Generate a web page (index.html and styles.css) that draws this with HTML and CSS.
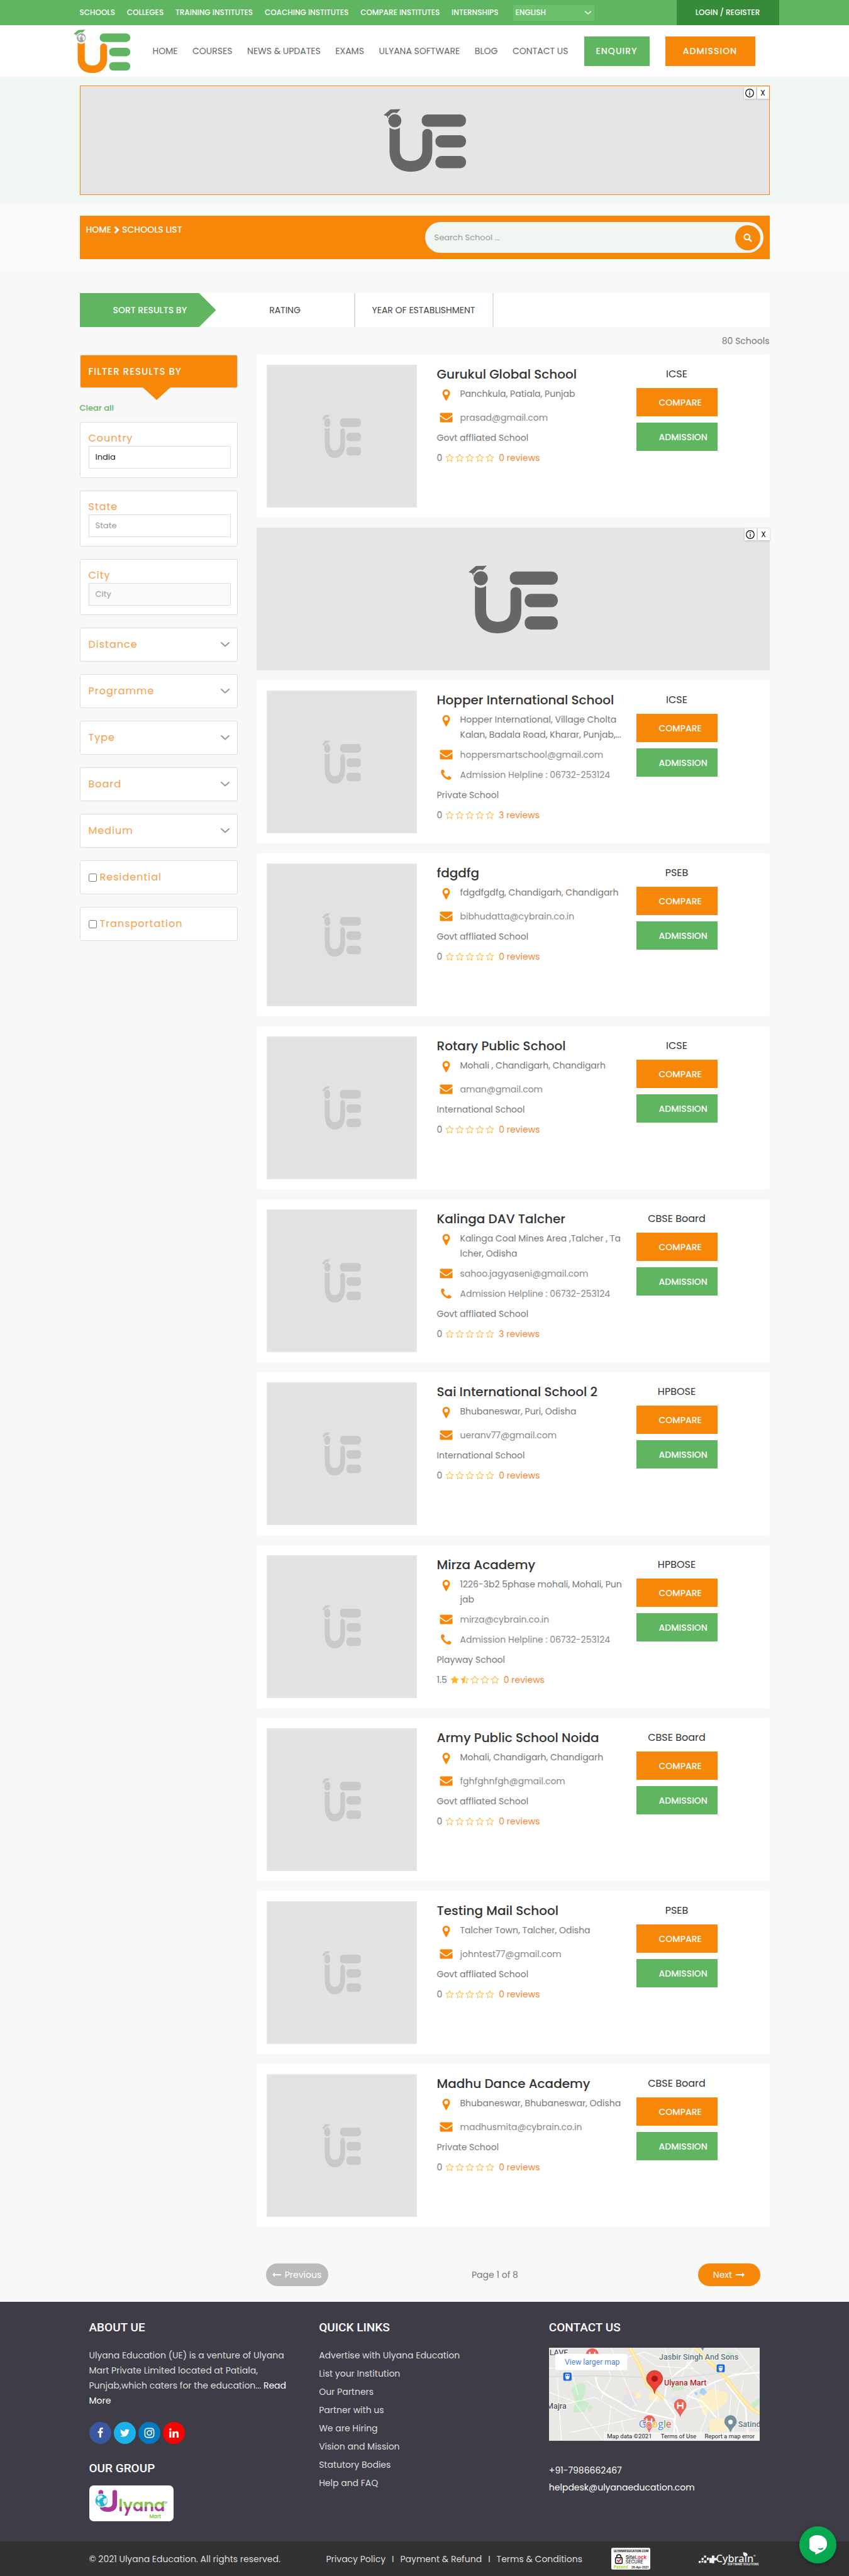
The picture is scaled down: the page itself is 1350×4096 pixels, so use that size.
FILE: index.html
```html
<!DOCTYPE html>
<html lang="en">
<head>
<meta charset="utf-8">
<meta name="viewport" content="width=device-width, initial-scale=1">
<title>Schools List - Ulyana Education</title>
<link rel="stylesheet" href="styles.css">
</head>
<body>
<svg class="sprite" aria-hidden="true">
  <symbol id="ue" viewBox="0 0 132 100" preserveAspectRatio="none">
    <path class="cap" d="M0 10L11 1L27 0.500L21 7Q14 4 9 11L7 12L7.500 16L5 11.500Z"/>
    <circle class="globe" cx="18" cy="19" r="10.500"/>
    <path class="land" d="M10 15l5-4 4 2-2 4-3 2 2 5-3 1zM21 12l5 4 1 5-3 5-3-3 1-3-3-3z"/>
    <path class="u" d="M9.500 30Q18 36 26 30V66C26 77 32 83 43.500 83C55 83 62 77 62 66V40a8 8 0 0 1 16 0V67C78 88 65 100 43.500 100C22 100 9.500 88 9.500 67Z"/>
    <g class="e"><rect x="61" y="9" width="71" height="19.500" rx="9"/><rect x="83" y="42" width="49" height="19.500" rx="9"/><rect x="83" y="75" width="49" height="19.500" rx="9"/></g>
  </symbol>
  <symbol id="pin" viewBox="0 0 12 18"><path fill-rule="evenodd" d="M6 0a6 6 0 0 1 6 6c0 1.500-.5 2.500-1 3.500L7 17.200a1.100 1.100 0 0 1-2 0L1 9.500C.5 8.500 0 7.500 0 6a6 6 0 0 1 6-6zM6 3a3 3 0 1 0 0 6a3 3 0 0 0 0-6z"/></symbol>
  <symbol id="mail" viewBox="0 0 20 16"><path d="M0 3.800V2a1.500 1.500 0 0 1 1.500-1.500h17A1.500 1.500 0 0 1 20 2v1.800l-8 5.700q-2 1.400-4 0zM0 5.800l7.500 5.300q2.500 1.600 5 0L20 5.800V14a1.500 1.500 0 0 1-1.500 1.500h-17A1.500 1.500 0 0 1 0 14z"/></symbol>
  <symbol id="phone" viewBox="190 190 1420 1360"><path d="M1600 1240q0 27-10 70.500t-21 68.500q-21 50-122 106-94 51-186 51-27 0-53-3.500t-57.500-12.500-47-14.500-55.500-20.500-49-18q-98-35-175-83-127-79-264-216t-216-264q-48-77-83-175-3-9-18-49t-20.500-55.500-14.500-47-12.500-57.500-3.500-53q0-92 51-186 56-101 106-122 25-11 68.500-21t70.500-10q14 0 21 3 18 6 53 76 11 19 30 54t35 63.500 31 53.500q3 4 17.500 25t21.500 35.500 7 28.500q0 20-28.500 50t-62 55-62 53-28.500 46q0 9 5 22.500t8.500 20.500 14 24 11.500 19q76 137 174 235t235 174q2 1 19 11.500t24 14 20.500 8.500 22.500 5q18 0 46-28.500t53-62 55-62 50-28.500q14 0 28.500 7t35.500 21.500 25 17.500q25 15 53.500 31t63.500 35 54 30q70 35 76 53 3 7 3 21z"/></symbol>
  <symbol id="star-o" viewBox="0 0 14 14"><path fill="none" stroke="currentColor" d="M7 1.200L8.800 5L13 5.500L9.900 8.400L10.700 12.600L7 10.500L3.300 12.600L4.100 8.400L1 5.500L5.200 5Z"/></symbol>
  <symbol id="star" viewBox="0 0 14 14"><path stroke="currentColor" d="M7 1.200L8.800 5L13 5.500L9.900 8.400L10.700 12.600L7 10.500L3.300 12.600L4.100 8.400L1 5.500L5.200 5Z"/></symbol>
  <symbol id="star-h" viewBox="0 0 14 14"><path fill="none" stroke="currentColor" d="M7 1.200L8.800 5L13 5.500L9.900 8.400L10.700 12.600L7 10.500L3.300 12.600L4.100 8.400L1 5.500L5.200 5Z"/><path d="M7 1.200V10.500L3.300 12.600L4.100 8.400L1 5.500L5.200 5Z"/></symbol>
  <symbol id="stars-0" viewBox="0 0 78 14"><use href="#star-o" width="14" height="14"/><use href="#star-o" x="16" width="14" height="14"/><use href="#star-o" x="32" width="14" height="14"/><use href="#star-o" x="48" width="14" height="14"/><use href="#star-o" x="64" width="14" height="14"/></symbol>
  <symbol id="stars-15" viewBox="0 0 78 14"><use href="#star" width="14" height="14"/><use href="#star-h" x="16" width="14" height="14"/><use href="#star-o" x="32" width="14" height="14"/><use href="#star-o" x="48" width="14" height="14"/><use href="#star-o" x="64" width="14" height="14"/></symbol>
  <symbol id="chev" viewBox="0 0 14 8"><path fill="none" stroke="currentColor" stroke-width="2" stroke-linecap="round" stroke-linejoin="round" d="M1 1L7 6.500L13 1"/></symbol>
  <symbol id="info" viewBox="0 0 14 14"><circle cx="7" cy="7" r="6.300" fill="none" stroke="currentColor" stroke-width="1.200"/><path d="M6.400 5.800H7.600V10.800H6.400ZM6.400 3H7.600V4.400H6.400Z"/></symbol>
  <symbol id="arrow" viewBox="0 0 14 8"><path d="M0 3H10V.3L14 4L10 7.700V5H0Z"/></symbol>
</svg>

<div class="topbar">
  <div class="container topbar-row">
    <nav class="topnav" aria-label="Directories">
      <a href="#">SCHOOLS</a><a href="#">COLLEGES</a><a href="#">TRAINING INSTITUTES</a><a href="#">COACHING INSTITUTES</a><a href="#">COMPARE INSTITUTES</a><a href="#">INTERNSHIPS</a>
    </nav>
    <div class="lang"><select aria-label="Language"><option>ENGLISH</option></select><svg><use href="#chev"/></svg></div>
    <a class="login" href="#">LOGIN / REGISTER</a>
  </div>
</div>

<header class="header">
  <div class="container header-row">
    <a class="brand" href="#" aria-label="Ulyana Education"><svg><use href="#ue"/></svg></a>
    <nav class="mainnav" aria-label="Main">
      <a href="#">HOME</a><a href="#">COURSES</a><a href="#">NEWS &amp; UPDATES</a><a href="#">EXAMS</a><a href="#">ULYANA SOFTWARE</a><a href="#">BLOG</a><a href="#">CONTACT US</a>
    </nav>
    <button class="btn enquiry">ENQUIRY</button>
    <button class="btn admission">ADMISSION</button>
  </div>
</header>

<section class="hero">
  <div class="container ad ad-top">
    <svg class="ad-logo"><use href="#ue"/></svg>
    <div class="ad-tags"><button aria-label="About this ad"><svg><use href="#info"/></svg></button><button aria-label="Close ad">X</button></div>
  </div>
</section>

<section class="crumbs">
  <div class="container crumb-bar">
    <p class="crumb"><a href="#">HOME</a><svg viewBox="0 0 9 13"><path fill="none" stroke="currentColor" stroke-width="3" d="M1.500 1.500L6.500 6.500L1.500 11.500"/></svg><span>SCHOOLS LIST</span></p>
    <form class="search">
      <input type="text" aria-label="Search School" placeholder="Search School ...">
      <button type="button" aria-label="Search"><svg viewBox="0 0 14 14"><circle cx="5.700" cy="5.700" r="4.300" fill="none" stroke="currentColor" stroke-width="2.200"/><path stroke="currentColor" stroke-width="2.600" stroke-linecap="round" d="M9.500 9.500L12.300 12.300"/></svg></button>
    </form>
  </div>
</section>

<main class="main">
  <div class="container">
    <div class="sortbar">
      <span class="sort-label">SORT RESULTS BY</span>
      <button>RATING</button>
      <button class="wide">YEAR OF ESTABLISHMENT</button>
    </div>
    <p class="count">80 Schools</p>
    <div class="columns">
      <aside class="filters">
        <h2 class="filter-title">FILTER RESULTS BY</h2>
        <a class="clear" href="#">Clear all</a>
        <div class="box field"><label for="country">Country</label><input id="country" type="text" value="India"></div>
        <div class="box field"><label for="state">State</label><input id="state" type="text" placeholder="State"></div>
        <div class="box field"><label for="city">City</label><input id="city" class="shaded" type="text" placeholder="City"></div>
        <button class="box fold">Distance<svg><use href="#chev"/></svg></button>
        <button class="box fold">Programme<svg><use href="#chev"/></svg></button>
        <button class="box fold">Type<svg><use href="#chev"/></svg></button>
        <button class="box fold">Board<svg><use href="#chev"/></svg></button>
        <button class="box fold">Medium<svg><use href="#chev"/></svg></button>
        <label class="box check"><input type="checkbox">Residential</label>
        <label class="box check"><input type="checkbox">Transportation</label>
      </aside>

      <div class="results">
        <article class="card">
          <div class="photo"><svg><use href="#ue"/></svg></div>
          <div class="info"><h3>Gurukul Global School</h3>
            <p class="addr"><svg class="pin"><use href="#pin"/></svg><span>Panchkula, Patiala, Punjab</span></p>
            <p class="row"><svg class="mail"><use href="#mail"/></svg>prasad@gmail.com</p>
            <p class="kind">Govt affliated School</p>
            <p class="rate">0<svg class="stars"><use href="#stars-0"/></svg><a href="#">0 reviews</a></p></div>
          <div class="actions"><p>ICSE</p><button class="compare">COMPARE</button><button class="apply">ADMISSION</button></div>
        </article>

        <div class="ad ad-inline">
          <svg class="ad-logo big"><use href="#ue"/></svg>
          <div class="ad-tags"><button aria-label="About this ad"><svg><use href="#info"/></svg></button><button aria-label="Close ad">X</button></div>
        </div>

        <article class="card">
          <div class="photo"><svg><use href="#ue"/></svg></div>
          <div class="info"><h3>Hopper International School</h3>
            <p class="addr"><svg class="pin"><use href="#pin"/></svg><span>Hopper International, Village Cholta<br>Kalan, Badala Road, Kharar, Punjab,...</span></p>
            <p class="row"><svg class="mail"><use href="#mail"/></svg>hoppersmartschool@gmail.com</p>
            <p class="row"><svg class="phone"><use href="#phone"/></svg>Admission Helpline : 06732-253124</p>
            <p class="kind">Private School</p>
            <p class="rate">0<svg class="stars"><use href="#stars-0"/></svg><a href="#">3 reviews</a></p></div>
          <div class="actions"><p>ICSE</p><button class="compare">COMPARE</button><button class="apply">ADMISSION</button></div>
        </article>

        <article class="card">
          <div class="photo"><svg><use href="#ue"/></svg></div>
          <div class="info"><h3>fdgdfg</h3>
            <p class="addr"><svg class="pin"><use href="#pin"/></svg><span>fdgdfgdfg, Chandigarh, Chandigarh</span></p>
            <p class="row"><svg class="mail"><use href="#mail"/></svg>bibhudatta@cybrain.co.in</p>
            <p class="kind">Govt affliated School</p>
            <p class="rate">0<svg class="stars"><use href="#stars-0"/></svg><a href="#">0 reviews</a></p></div>
          <div class="actions"><p>PSEB</p><button class="compare">COMPARE</button><button class="apply">ADMISSION</button></div>
        </article>

        <article class="card">
          <div class="photo"><svg><use href="#ue"/></svg></div>
          <div class="info"><h3>Rotary Public School</h3>
            <p class="addr"><svg class="pin"><use href="#pin"/></svg><span>Mohali , Chandigarh, Chandigarh</span></p>
            <p class="row"><svg class="mail"><use href="#mail"/></svg>aman@gmail.com</p>
            <p class="kind">International School</p>
            <p class="rate">0<svg class="stars"><use href="#stars-0"/></svg><a href="#">0 reviews</a></p></div>
          <div class="actions"><p>ICSE</p><button class="compare">COMPARE</button><button class="apply">ADMISSION</button></div>
        </article>

        <article class="card">
          <div class="photo"><svg><use href="#ue"/></svg></div>
          <div class="info"><h3>Kalinga DAV Talcher</h3>
            <p class="addr"><svg class="pin"><use href="#pin"/></svg><span>Kalinga Coal Mines Area ,Talcher , Ta<br>lcher, Odisha</span></p>
            <p class="row"><svg class="mail"><use href="#mail"/></svg>sahoo.jagyaseni@gmail.com</p>
            <p class="row"><svg class="phone"><use href="#phone"/></svg>Admission Helpline : 06732-253124</p>
            <p class="kind">Govt affliated School</p>
            <p class="rate">0<svg class="stars"><use href="#stars-0"/></svg><a href="#">3 reviews</a></p></div>
          <div class="actions"><p>CBSE Board</p><button class="compare">COMPARE</button><button class="apply">ADMISSION</button></div>
        </article>

        <article class="card">
          <div class="photo"><svg><use href="#ue"/></svg></div>
          <div class="info"><h3>Sai International School 2</h3>
            <p class="addr"><svg class="pin"><use href="#pin"/></svg><span>Bhubaneswar, Puri, Odisha</span></p>
            <p class="row"><svg class="mail"><use href="#mail"/></svg>ueranv77@gmail.com</p>
            <p class="kind">International School</p>
            <p class="rate">0<svg class="stars"><use href="#stars-0"/></svg><a href="#">0 reviews</a></p></div>
          <div class="actions"><p>HPBOSE</p><button class="compare">COMPARE</button><button class="apply">ADMISSION</button></div>
        </article>

        <article class="card">
          <div class="photo"><svg><use href="#ue"/></svg></div>
          <div class="info"><h3>Mirza Academy</h3>
            <p class="addr"><svg class="pin"><use href="#pin"/></svg><span>1226-3b2 5phase mohali, Mohali, Pun<br>jab</span></p>
            <p class="row"><svg class="mail"><use href="#mail"/></svg>mirza@cybrain.co.in</p>
            <p class="row"><svg class="phone"><use href="#phone"/></svg>Admission Helpline : 06732-253124</p>
            <p class="kind">Playway School</p>
            <p class="rate">1.5<svg class="stars"><use href="#stars-15"/></svg><a href="#">0 reviews</a></p></div>
          <div class="actions"><p>HPBOSE</p><button class="compare">COMPARE</button><button class="apply">ADMISSION</button></div>
        </article>

        <article class="card">
          <div class="photo"><svg><use href="#ue"/></svg></div>
          <div class="info"><h3>Army Public School Noida</h3>
            <p class="addr"><svg class="pin"><use href="#pin"/></svg><span>Mohali, Chandigarh, Chandigarh</span></p>
            <p class="row"><svg class="mail"><use href="#mail"/></svg>fghfghnfgh@gmail.com</p>
            <p class="kind">Govt affliated School</p>
            <p class="rate">0<svg class="stars"><use href="#stars-0"/></svg><a href="#">0 reviews</a></p></div>
          <div class="actions"><p>CBSE Board</p><button class="compare">COMPARE</button><button class="apply">ADMISSION</button></div>
        </article>

        <article class="card">
          <div class="photo"><svg><use href="#ue"/></svg></div>
          <div class="info"><h3>Testing Mail School</h3>
            <p class="addr"><svg class="pin"><use href="#pin"/></svg><span>Talcher Town, Talcher, Odisha</span></p>
            <p class="row"><svg class="mail"><use href="#mail"/></svg>johntest77@gmail.com</p>
            <p class="kind">Govt affliated School</p>
            <p class="rate">0<svg class="stars"><use href="#stars-0"/></svg><a href="#">0 reviews</a></p></div>
          <div class="actions"><p>PSEB</p><button class="compare">COMPARE</button><button class="apply">ADMISSION</button></div>
        </article>

        <article class="card">
          <div class="photo"><svg><use href="#ue"/></svg></div>
          <div class="info"><h3>Madhu Dance Academy</h3>
            <p class="addr"><svg class="pin"><use href="#pin"/></svg><span>Bhubaneswar, Bhubaneswar, Odisha</span></p>
            <p class="row"><svg class="mail"><use href="#mail"/></svg>madhusmita@cybrain.co.in</p>
            <p class="kind">Private School</p>
            <p class="rate">0<svg class="stars"><use href="#stars-0"/></svg><a href="#">0 reviews</a></p></div>
          <div class="actions"><p>CBSE Board</p><button class="compare">COMPARE</button><button class="apply">ADMISSION</button></div>
        </article>

        <div class="pager">
          <button class="prev" disabled><svg class="flip"><use href="#arrow"/></svg>Previous</button>
          <span>Page 1 of 8</span>
          <button class="next">Next<svg><use href="#arrow"/></svg></button>
        </div>
      </div>
    </div>
  </div>
</main>

<footer class="footer">
  <div class="container footer-cols">
    <section>
      <h2>ABOUT UE</h2>
      <p class="about">Ulyana Education (UE) is a venture of Ulyana<br>Mart Private Limited located at Patiala,<br>Punjab,which caters for the education... <a href="#">Read<br>More</a></p>
      <div class="social">
        <a class="fb" href="#" aria-label="Facebook"><svg viewBox="0 0 1792 1792"><path d="M1343 12v264h-157q-86 0-116 36t-30 108v189h293l-39 296h-254v759h-306v-759h-255v-296h255v-218q0-186 104-288.500t277-102.500q147 0 228 12z"/></svg></a>
        <a class="tw" href="#" aria-label="Twitter"><svg viewBox="0 0 1792 1792"><path d="M1684 408q-67 98-162 167 1 14 1 42 0 130-38 259.500t-115.500 248.500-184.500 210.500-258 146-323 54.500q-271 0-496-145 35 4 78 4 225 0 401-138-105-2-188-64.500t-114-159.500q33 5 61 5 43 0 85-11-112-23-185.500-111.500t-73.500-205.500v-4q68 38 146 41-66-44-105-115t-39-154q0-88 44-163 121 149 294.500 238.500t371.500 99.500q-8-38-8-74 0-134 94.500-228.500t228.500-94.500q140 0 236 102 109-21 205-78-37 115-142 178 93-10 186-50z"/></svg></a>
        <a class="ig" href="#" aria-label="Instagram"><svg viewBox="0 0 18 18"><g fill="none" stroke="#fff" stroke-width="1.700"><rect x="1.500" y="1.500" width="15" height="15" rx="4"/><circle cx="9" cy="9" r="3.700"/></g><circle cx="13.200" cy="4.800" r="1.100"/></svg></a>
        <a class="li" href="#" aria-label="LinkedIn"><svg viewBox="0 0 18 18"><circle cx="3" cy="3" r="2"/><path d="M1.300 6.300H4.700V17H1.300ZM6.700 6.300H10V7.800Q11 6 13.300 6Q17 6 17 10.500V17H13.600V11.200Q13.600 8.900 12 8.900Q10.100 8.900 10.100 11.300V17H6.700Z"/></svg></a>
      </div>
      <h2 class="group">OUR GROUP</h2>
      <a class="mart" href="#" aria-label="Ulyana Mart">
        <svg viewBox="0 0 136 58">
          <defs><linearGradient id="two" x1="0" y1="0" x2="0" y2="1"><stop offset=".56" stop-color="#84c541"/><stop offset=".56" stop-color="#a83a96"/></linearGradient></defs>
          <path fill="none" stroke="#a83a96" stroke-width="7.500" stroke-linecap="round" d="M18.500 11V25M41 11V29C41 36 37 39 30 39Q24 39 21 36"/>
          <circle cx="19.500" cy="24.500" r="11" fill="#fff"/><circle cx="19.500" cy="24.500" r="10" fill="#24b5d3"/>
          <path fill="#d8f3f8" d="M14 17l6-1 2 3-4 2-3 4-3-3zM23 22l5-2 1 6-4 5-3-4zM12 27l4 1 2 5-4-1z"/>
          <text x="47" y="42" class="mart-word">lyana</text>
          <text x="97" y="53" class="mart-sub">Mart</text><text x="119" y="30" class="mart-tm">TM</text>
        </svg>
      </a>
    </section>
    <section>
      <h2>QUICK LINKS</h2>
      <ul class="links">
        <li><a href="#">Advertise with Ulyana Education</a></li><li><a href="#">List your Institution</a></li><li><a href="#">Our Partners</a></li><li><a href="#">Partner with us</a></li><li><a href="#">We are Hiring</a></li><li><a href="#">Vision and Mission</a></li><li><a href="#">Statutory Bodies</a></li><li><a href="#">Help and FAQ</a></li>
      </ul>
    </section>
    <section>
      <h2>CONTACT US</h2>
      <svg class="map" viewBox="0 0 1020 450" preserveAspectRatio="xMidYMid slice" role="img" aria-label="Map">
        <rect width="1020" height="450" fill="#e9e8e5"/>
        <g fill="#c9eccb"><path d="M125 180l45-10 8 30-15 50 30 20-22 40-55 5 10-60-18-50z"/><path d="M175 60h55l10 30-60 10zM185 285l15-12 12 15-20 22zM590 180l30-20 35 25-10 18-50 5zM975 270l45-30v25l-30 30zM560 370l12-20 20 25-15 25zM770 385l30-5 5 40-35-10zM835 55l30-35 30 10-35 30z"/></g>
        <g fill="#fcf0c8"><path d="M745 215l50-15 70 20-5 45-60 45-60-20-20-40zM485 220l35-8 20 25-15 30-40-15zM775 345l75-5 15 60-90 15zM405 225l30-12 10 25-25 10zM745 290l25 0-8 40-22-10z"/></g>
        <g fill="#e0e4ea"><path d="M365 225l45 5 15 30-30 30-45-20zM590 240l40-10 10 30-40 15zM590 400l50 5 10 45h-60z"/></g>
        <path fill="#fbdadc" d="M372 192l50 40-5 15-48-38z"/>
        <g fill="#a5d2fa"><path d="M738 190l12 10 14 14-16 18-22-14z"/><circle cx="710" cy="222" r="8"/></g>
        <g fill="none" stroke="#fff" stroke-width="3">
          <path d="M40 140L60 450M0 215L120 260L260 450M0 290L220 240L400 340M90 40L140 230M260 40L300 140L250 250M300 0L350 120L420 280M330 60L460 20L560 60M430 30L520 90L700 100M560 0L590 130M640 30L700 110L800 180M700 0L640 140M620 330L700 220L640 160M700 220L760 330L720 440M800 160L820 340M880 230L860 450M940 160L880 450M1000 80L880 150M900 0L1000 130L1020 160M300 280L280 450M100 410L420 340M350 350L370 450M180 160L320 250M0 100L140 90M740 20L860 160M560 250L620 290L580 330M660 300L760 280"/>
        </g>
        <g fill="none" stroke="#fff" stroke-width="7"><path d="M225 140C230 210 270 230 330 255L400 300L600 345L640 450M525 235L465 315M550 240L610 325L600 450M560 240C560 160 600 130 660 95L740 10M665 250C690 190 740 200 790 170L900 130L1020 120M665 230L740 260L810 340"/><path d="M855 170L950 290L960 420"/></g>
        <path fill="none" stroke="#d9dcdf" stroke-width="5" d="M0 140L225 135L600 148L850 120"/>
        <g fill="none" stroke="#fbdb7e" stroke-width="17"><path d="M390 0L440 90L475 180L555 245M705 0L850 140C900 200 960 300 1020 318"/></g>
        <g fill="none" stroke="#ffeeb0" stroke-width="11"><path d="M390 0L440 90L475 180L555 245M705 0L850 140C900 200 960 300 1020 318"/></g>
        <g class="map-name"><text x="2" y="38">LAVE</text><text x="-12" y="295">Majra</text><text x="532" y="58" class="poi">Jasbir Singh And Sons</text><text x="556" y="182" class="red">Ulyana Mart</text><text x="914" y="384" class="poi">Satindra</text></g>
        <g fill="#1a66dc"><rect x="69" y="120" width="40" height="40" rx="7"/><rect x="810" y="81" width="39" height="38" rx="7"/></g>
        <g fill="#fff"><rect x="79" y="127" width="20" height="21" rx="4"/><path d="M80 153l5-6h8l5 6z"/><rect x="820" y="88" width="19" height="20" rx="4"/><path d="M820 114l5-6h8l5 6z"/></g>
        <g fill="#1a66dc"><rect x="82" y="131" width="6" height="6"/><rect x="91" y="131" width="6" height="6"/><rect x="823" y="92" width="5" height="6"/><rect x="831" y="92" width="5" height="6"/></g>
        <g fill="#eb6258"><path d="M209 70C195 50 178 45 178 34a31 31 0 0 1 62 0C240 45 225 50 209 70zM634 337C628 310 604 300 604 278a30 30 0 0 1 60 0C664 300 640 310 634 337zM484 412C478 385 454 378 454 356a30 30 0 0 1 60 0C514 378 490 385 484 412z"/></g>
        <path fill="none" stroke="#fff" stroke-width="7" d="M622 264v32M646 264v32M622 280h24M472 342v32M496 342v32M472 358h24M197 20v32M221 20v32M197 36h24"/>
        <path fill="#e94335" stroke="#b3251b" stroke-width="2" d="M510 222C504 185 471 180 471 149a39 39 0 0 1 78 0C549 180 516 185 510 222z"/><circle cx="510" cy="150" r="15" fill="#a91512"/>
        <path fill="#758e9a" d="M877 412C871 385 847 378 847 356a30 30 0 0 1 60 0C907 378 883 385 877 412zM734 0h16l-8 15z"/><circle cx="877" cy="359" r="11" fill="#fff"/>
        <text x="434" y="387" class="google"><tspan fill="#4b82ee">G</tspan><tspan fill="#e94335">o</tspan><tspan fill="#f4b400">o</tspan><tspan fill="#4b82ee">g</tspan><tspan fill="#34a853">l</tspan><tspan fill="#e94335">e</tspan></text>
        <rect x="264" y="408" width="756" height="42" fill="#f5f5f5" opacity=".85"/>
        <g class="map-legal"><text x="280" y="438">Map data ©2021</text><text x="540" y="438">Terms of Use</text><text x="752" y="438">Report a map error</text></g>
        <rect x="30" y="30" width="348" height="78" rx="5" fill="#fff"/><text x="76" y="81" class="larger">View larger map</text>
      </svg>
      <p class="contact"><a href="#">+91-7986662467</a><a href="#">helpdesk@ulyanaeducation.com</a></p>
    </section>
  </div>
  <div class="legal">
    <div class="container legal-row">
      <span>© 2021 Ulyana Education. All rights reserved.</span>
      <nav aria-label="Legal"><a href="#">Privacy Policy</a><i>I</i><a href="#">Payment &amp; Refund</a><i>I</i><a href="#">Terms &amp; Conditions</a></nav>
      <svg class="lock" viewBox="0 0 186 104">
        <rect width="186" height="104" rx="7" fill="#fff"/><rect x="8" y="8" width="162" height="17" fill="#ececec"/>
        <text x="12" y="22" class="l-dom">ULYANAEDUCATION.COM</text>
        <rect x="20" y="47" width="32" height="27" rx="3" fill="none" stroke="#222" stroke-width="5"/><path d="M26 46v-4a10 9 0 0 1 20 0v4" fill="none" stroke="#222" stroke-width="5"/><path d="M28 58l7 8 12-14" fill="none" stroke="#e0242a" stroke-width="5"/>
        <text x="68" y="54" class="l-big">Site<tspan fill="#e0242a">Lock</tspan></text><text x="68" y="75" class="l-sec">SECURE</text>
        <text x="12" y="98" class="l-pass">Passed</text><text x="96" y="98" class="l-date">28-Apr-2021</text>
      </svg>
      <svg class="cybrain" viewBox="0 0 300 66">
        <path d="M0 42h10v10H0zM14 28h10v10H14zM14 42h8v8h-8zM26 16h10v10H26zM26 40h12v12H26zM40 26h10v12H40zM52 40h12v12H52zM64 16h12v12h12v12H76v14H64V40H52V28h12z"/>
        <text x="84" y="49" class="c-big">Cybrain</text><path d="M216 0q20 0 22 12q-2 8-12 8q-10-2-10-20z"/><text x="266" y="24" class="c-r">®</text><text x="140" y="65" class="c-sub">SOFTWARE SOLUTIONS</text>
      </svg>
    </div>
  </div>
</footer>

<button class="chat" aria-label="Open chat"><svg viewBox="0 0 84 92"><path fill="#fff" d="M42 0a42 40 0 0 1 42 42c0 26-22 38-56 50l1-11A42 40 0 0 1 42 0z"/><path fill="#06a94e" d="M40 61Q54 66 67 59Q66 70 54 70Q43 69 40 61z"/></svg></button>
</body>
</html>
```
FILE: styles.css
```css
:root {
  --orange: #f78708;
  --green: #5fb560;
  --text: #777;
  --line: #ddd;
}
* { box-sizing: border-box; }
body { margin: 0; background: #f8f8f8; color: var(--text); font: 14px/24px Poppins, Inter, sans-serif; }
p, h2, h3, ul { margin: 0; padding: 0; }
ul { list-style: none; }
a { color: inherit; text-decoration: none; }
button, input, select { margin: 0; padding: 0; border: 0; background: none; color: inherit; font: inherit; }
button { cursor: pointer; }
svg { display: block; flex: none; fill: currentColor; }
.sprite { position: absolute; width: 0; height: 0; }
.container { width: 100%; max-width: 1097px; margin: 0 auto; }

.topbar { background: var(--green); color: #fff; font-size: 12px; font-weight: 500; }
.topbar-row { display: flex; align-items: center; height: 40px; }
.topnav { display: flex; justify-content: space-between; width: 666px; white-space: nowrap; }
.lang { position: relative; width: 129px; margin-left: 23px; }
.lang select { width: 100%; height: 25px; padding-left: 4px; background: #6bc06c; appearance: none; }
.lang svg { position: absolute; right: 5px; top: 9px; width: 10px; height: 7px; }
.login { margin: 0 -15px 0 auto; width: 163px; line-height: 40px; text-align: center; background: #358b38; }

.header { background: #fff; }
.header-row { display: flex; align-items: center; height: 82px; }
.brand { margin-left: -10px; }
.brand svg { width: 90px; height: 69px; }
.cap { fill: var(--cap, currentColor); }
.globe { fill: var(--globe, currentColor); }
.land { fill: var(--land, none); }
.u { fill: var(--u, currentColor); }
.e { fill: var(--e, currentColor); }
.brand { --cap: var(--green); --globe: #a3a3a3; --land: #eee; --u: var(--orange); --e: var(--green); }
.mainnav { display: flex; justify-content: space-between; width: 661px; margin-left: 36px; color: #666; white-space: nowrap; }
.btn { height: 47px; margin-left: 25px; color: #fff; font-weight: 500; letter-spacing: 1px; }
.enquiry { width: 104px; background: var(--green); }
.admission { width: 143px; background: var(--orange); }

.hero { padding: 14px 0 13px; background: #f0f7f2; }
.ad { position: relative; display: flex; align-items: center; justify-content: center; background: #e5e5e5; }
.ad-top { height: 174px; border: 1px solid var(--orange); }
.ad-inline { height: 227px; }
.ad-logo { width: 131px; height: 100px; color: #666; }
.ad-logo.big { width: 142px; height: 108px; }
.ad-tags { position: absolute; top: 1px; right: 0; display: flex; gap: 2px; }
.ad-tags button { display: grid; place-items: center; width: 19px; height: 19px; background: #fff; color: #000; font-size: 12px; line-height: 19px; box-shadow: 0 1px 3px #0003; }
.ad-tags svg { width: 14px; height: 14px; }

.crumbs { padding: 20px 0; background: #fafafa; }
.crumb-bar { display: flex; justify-content: space-between; padding: 10px; background: var(--orange); }
.crumb { display: flex; align-items: center; gap: 4px; height: 24px; color: #fff; font-weight: 500; }
.crumb svg { width: 9px; height: 13px; }
.search { display: flex; align-items: center; width: 538px; height: 49px; padding: 0 5px 0 15px; border-radius: 25px; background: #f0f7f2; }
.search input { flex: 1; min-width: 0; height: 40px; outline: 0; font-size: 13px; }
.search button { display: grid; place-items: center; width: 40px; height: 40px; border-radius: 50%; background: var(--orange); color: #fff; }
.search svg { width: 14px; height: 14px; }
::placeholder { color: #999; opacity: 1; }

.main { padding: 34px 0 25px; }
.sortbar { display: flex; height: 54px; background: #fff; color: #444; }
.sort-label { width: 217px; padding-left: 53px; line-height: 54px; background: var(--green); color: #fff; font-weight: 500; clip-path: polygon(0 0, 190px 0, 100% 50%, 190px 100%, 0 100%); }
.sortbar button { width: 221px; border-right: 2px solid var(--line); }
.sortbar .wide { width: 220px; }
.count { padding: 10px 0; text-align: right; }
.columns { display: grid; grid-template-columns: 251px minmax(0, 1fr); gap: 30px; align-items: start; }

.filters { display: flex; flex-direction: column; }
.filter-title { position: relative; margin-bottom: 22px; padding-left: 13px; border: 1px solid var(--line); border-radius: 3px; background: var(--orange); color: #fff; font-size: 15px; font-weight: 500; line-height: 51px; letter-spacing: 1px; }
.filter-title::after { content: ""; position: absolute; top: 100%; left: 99px; border: 22px solid transparent; border-top: 20px solid var(--orange); border-bottom: 0; }
.clear { margin-bottom: 12px; color: var(--green); font-size: 13px; font-weight: 500; line-height: 20px; }
.box { margin-bottom: 20px; border: 1px solid var(--line); border-radius: 3px; background: #fff; color: #f89d4a; font-size: 16px; letter-spacing: 1px; }
.field { display: flex; flex-direction: column; padding: 13px 10px 14px 13px; }
.field input { height: 36px; padding: 0 10px; border: 1px solid var(--line); color: #222; font-size: 13px; letter-spacing: 0; }
.field .shaded { background: #fafafa; }
.fold { display: flex; align-items: center; justify-content: space-between; height: 54px; padding: 0 12px 0 13px; text-align: left; }
.fold svg { width: 14px; height: 8px; color: #999; }
.check { display: flex; align-items: center; gap: 5px; height: 54px; padding: 0 13px; }
.check input { width: 13px; height: 13px; }

.card { display: flex; margin-bottom: 16px; padding: 16px; border-radius: 4px; background: #fff; }
.photo { display: grid; place-items: center; width: 239px; height: 227px; margin-right: 32px; border: 2px solid #e6e6e6; background: #e2e2e2; color: #c9c9c9; }
.photo svg { width: 62px; height: 69px; }
.info { flex: 1; min-width: 0; white-space: nowrap; }
.info h3 { margin-bottom: 4px; color: #333; font-size: 20px; font-weight: 500; line-height: 30px; }
.addr { display: flex; gap: 8px; min-height: 34px; padding-bottom: 4px; }
.row { display: flex; align-items: center; gap: 8px; line-height: 32px; color: #888; }
.addr svg, .row svg { width: 29px; color: var(--orange); }
.addr .pin { height: 18px; margin-top: 5px; }
.row .mail { height: 16px; }
.row .phone { height: 16px; }
.kind, .rate { line-height: 32px; }
.rate { display: flex; align-items: center; }
.stars { width: 78px; height: 14px; margin: 0 7px 0 5px; color: #ffb62b; }
.rate a { color: #f58634; }
.actions { display: flex; flex-direction: column; width: 129px; margin-right: 67px; text-align: center; }
.actions p { margin-bottom: 7px; color: #333; font-size: 16px; line-height: 30px; }
.actions button { height: 45px; margin-bottom: 10px; padding-left: 36px; color: #fff; font-weight: 500; text-align: left; }
.compare { background: var(--orange); }
.apply { background: var(--green); }
.ad-inline { margin-bottom: 16px; }

.pager { display: grid; grid-template-columns: 5fr 4fr 3fr; align-items: center; margin-top: 58px; padding: 0 15px; }
.pager button { display: flex; align-items: center; justify-content: center; gap: 6px; width: 99px; height: 36px; border-radius: 18px; color: #fff; }
.pager svg { width: 14px; height: 8px; }
.pager .flip { transform: scaleX(-1); }
.prev { background: #bbb; }
.pager .next { justify-self: end; background: var(--orange); }

.footer { background: #3e3d47; color: #ddd; }
.footer-cols { display: grid; grid-template-columns: repeat(3, 1fr); padding: 30px 0 32px; }
.footer-cols section { padding: 0 15px; }
.footer h2 { margin-bottom: 21px; color: #fff; font: 500 19px/22px Roboto, sans-serif; }
.about { white-space: nowrap; }
.about a, .contact { color: #fff; }
.social { display: flex; gap: 4px; margin: 22px 0 28px; }
.social a { display: grid; place-items: center; width: 35px; height: 35px; border-radius: 50%; color: #fff; }
.social svg { width: 17px; height: 17px; }
.fb { background: #3b579d; }
.tw { background: #1cb2e9; }
.ig { background: #0778bd; }
.li { background: #f00; }
.footer .group { margin-bottom: 16px; }
.mart { display: block; width: 134px; height: 57px; border-radius: 7px; background: #fff; }
.mart svg { width: 100%; height: 100%; }
.mart-word { fill: url(#two); font: 600 26px Poppins, Inter, sans-serif; }
.mart-sub { fill: #84c541; font: 600 8px Poppins, Inter, sans-serif; }
.mart-tm { fill: #777; font: 5px Poppins, Inter, sans-serif; }
.links li { margin-bottom: 5px; }
.map { width: 100%; height: 148px; }
.map-name { fill: #4b535c; stroke: #fff; stroke-width: 5px; paint-order: stroke; font: 500 38px Roboto, sans-serif; }
.poi { fill: #567179; }
.red { fill: #b3191d; }
.google { stroke: #fff; stroke-width: 5px; paint-order: stroke; font: 500 48px "Open Sans", sans-serif; }
.map-legal { fill: #222; font: 29px Roboto, sans-serif; }
.larger { fill: #4b7fe6; font: 37px Roboto, sans-serif; }
.contact { display: flex; flex-direction: column; gap: 3px; margin-top: 35px; }
.legal { background: #323232; }
.legal-row { display: grid; grid-template-columns: 377fr 453fr 139fr 98fr; align-items: center; height: 55px; padding: 0 15px; white-space: nowrap; }
.legal i { margin: 0 10px; font-style: normal; }
.lock { width: 62px; height: 35px; }
.l-dom { font: 700 13px Inter, sans-serif; fill: #222; }
.l-big { font: 600 24px Inter, sans-serif; fill: #333; }
.l-sec { font: 500 21px Inter, sans-serif; fill: #333; }
.l-pass { font: 700 19px Inter, sans-serif; fill: #a6cf3c; }
.l-date { font: 700 13px Inter, sans-serif; fill: #222; }
.cybrain { width: 98px; height: 22px; color: #eee; }
.c-big { font: 500 50px "Noto Sans", sans-serif; }
.c-r { font: 16px Inter, sans-serif; }
.c-sub { font: 700 13px Inter, sans-serif; }
.chat { position: fixed; right: 20px; bottom: 20px; display: grid; place-items: center; width: 59px; height: 59px; border-radius: 50%; background: #06a94e; box-shadow: 0 2px 8px #0004; }
.chat svg { width: 28px; height: 31px; }
```
